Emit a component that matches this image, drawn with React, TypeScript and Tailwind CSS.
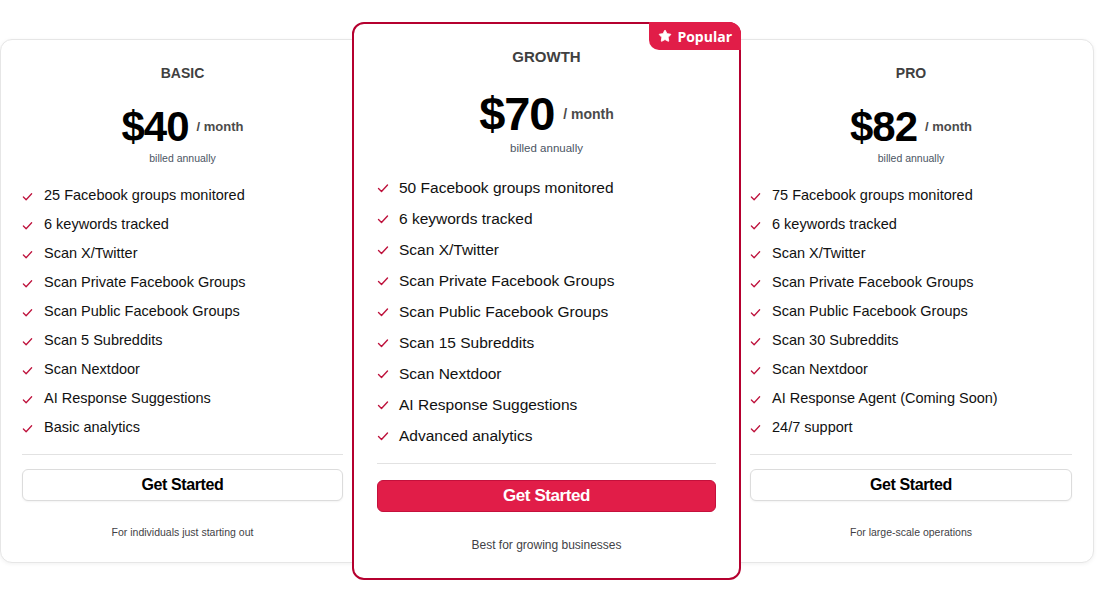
import { Star } from "lucide-react";

const BASIC = [
  "25 Facebook groups monitored",
  "6 keywords tracked",
  "Scan X/Twitter",
  "Scan Private Facebook Groups",
  "Scan Public Facebook Groups",
  "Scan 5 Subreddits",
  "Scan Nextdoor",
  "AI Response Suggestions",
  "Basic analytics",
];

const GROWTH = [
  "50 Facebook groups monitored",
  "6 keywords tracked",
  "Scan X/Twitter",
  "Scan Private Facebook Groups",
  "Scan Public Facebook Groups",
  "Scan 15 Subreddits",
  "Scan Nextdoor",
  "AI Response Suggestions",
  "Advanced analytics",
];

const PRO = [
  "75 Facebook groups monitored",
  "6 keywords tracked",
  "Scan X/Twitter",
  "Scan Private Facebook Groups",
  "Scan Public Facebook Groups",
  "Scan 30 Subreddits",
  "Scan Nextdoor",
  "AI Response Agent (Coming Soon)",
  "24/7 support",
];

function Check({ size = 11 }: { size?: number }) {
  return (
    <svg width={size} height={size} viewBox="0 0 12 12" fill="none" className="shrink-0">
      <polyline points="1.5,6.5 4.5,9.5 10.5,3" stroke="#be123c" strokeWidth="1.4" strokeLinecap="round" strokeLinejoin="round" />
    </svg>
  );
}

function SideCard({ title, price, features, note }: { title: string; price: string; features: string[]; note: string }) {
  return (
    <div className="h-[524px] shrink-0 rounded-xl border border-[#e6e6e6] bg-white px-[21px] pt-[23px] shadow-[0_1px_4px_rgba(0,0,0,0.06)]">
      <h3 className="text-center text-[14px] font-bold leading-[20px] text-[#404040]">{title}</h3>
      <div className="mt-[22px] flex items-center justify-center gap-[8px]">
        <span className="text-[42px] font-bold leading-[44px] tracking-tight text-black">{price}</span>
        <span className="text-[13px] font-bold text-[#4b4b4b]">/ month</span>
      </div>
      <p className="mt-[2px] text-center text-[10.5px] leading-[14px] text-[#4b5563]">billed annually</p>
      <ul className="mt-[16.5px]">
        {features.map((f) => (
          <li key={f} className="flex h-[29px] items-center gap-[11px] text-[14.5px] text-[#111]">
            <Check />
            <span>{f}</span>
          </li>
        ))}
      </ul>
      <div className="mt-[11.5px] h-px bg-[#e2e2e2]" />
      <button className="mt-[14px] h-[32px] w-full rounded-md border border-[#dcdcdc] bg-white text-[16px] font-bold tracking-tight text-black shadow-[0_1px_2px_rgba(0,0,0,0.05)]">
        Get Started
      </button>
      <p className="mt-[23px] text-center text-[10.5px] leading-[16px] text-[#3f3f46]">{note}</p>
    </div>
  );
}

function GrowthCard() {
  return (
    <div className="relative z-10 mx-[-13px] h-[558px] w-[389px] shrink-0 rounded-xl border-2 border-[#b5002f] bg-white px-[23px] pt-[23px]">
      <div className="absolute -right-[2px] -top-[2px] flex h-[28px] items-center gap-[5px] rounded-bl-[10px] rounded-tr-xl bg-[#e11d48] pl-[9px] pr-[9px]">
        <Star size={14} fill="white" stroke="white" strokeWidth={1.5} />
        <span className="text-[14px] font-bold text-white [font-family:'Open_Sans',sans-serif]">Popular</span>
      </div>
      <h3 className="text-center text-[15px] font-bold leading-[20px] text-[#404040]">GROWTH</h3>
      <div className="mt-[22px] flex items-center justify-center gap-[9px]">
        <span className="text-[47px] font-bold leading-[50px] tracking-tight text-black">$70</span>
        <span className="text-[14px] font-bold text-[#4b4b4b]">/ month</span>
      </div>
      <p className="mt-[2px] text-center text-[11.5px] leading-[14px] text-[#4b5563]">billed annually</p>
      <ul className="mt-[17.5px]">
        {GROWTH.map((f) => (
          <li key={f} className="flex h-[31px] items-center gap-[10px] text-[15.5px] text-[#111]">
            <Check size={12} />
            <span>{f}</span>
          </li>
        ))}
      </ul>
      <div className="mt-[11.5px] h-px bg-[#e2e2e2]" />
      <button className="mt-[16px] h-[32px] w-full rounded-md border border-[#c4103c] bg-[#e11d48] text-[17px] font-bold tracking-tight text-white">
        Get Started
      </button>
      <p className="mt-[25px] text-center text-[12px] leading-[16px] text-[#3f3f46]">Best for growing businesses</p>
    </div>
  );
}

export default function App() {
  return (
    <div className="flex h-[597px] w-[1108px] items-center bg-white pt-[5px] [font-family:'Liberation_Sans',Arial,sans-serif]">
      <div className="w-[365px] shrink-0">
        <SideCard title="BASIC" price="$40" features={BASIC} note="For individuals just starting out" />
      </div>
      <GrowthCard />
      <div className="w-[366px] shrink-0">
        <SideCard title="PRO" price="$82" features={PRO} note="For large-scale operations" />
      </div>
    </div>
  );
}
